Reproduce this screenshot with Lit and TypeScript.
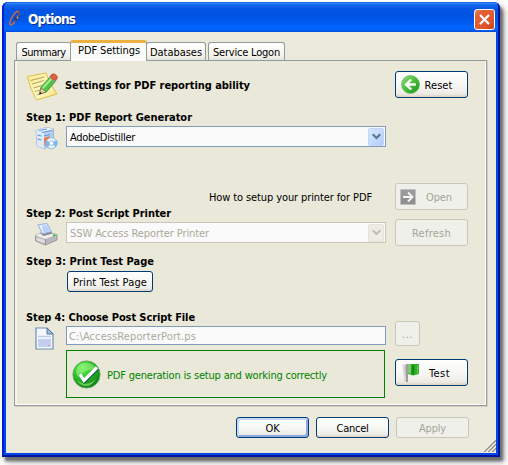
import { LitElement, html, svg, css } from "lit";
import { customElement, property } from "lit/decorators.js";

/** A single line of text whose tracking is adjusted to fill a given width. */
@customElement("fit-text")
class FitText extends LitElement {
  @property({ type: Number }) w = 0;
  @property() text = "";
  static styles = css`
    :host { display: inline-block; white-space: pre; flex: none; }
  `;
  render() {
    return html`<span>${this.text}</span>`;
  }
  updated() {
    const s = this.renderRoot.querySelector("span") as HTMLElement;
    s.style.letterSpacing = "0px";
    const natural = s.getBoundingClientRect().width;
    s.style.letterSpacing = (this.w - natural) / this.text.length + "px";
  }
}

const t = (text: string, w: number) => html`<fit-text .text=${text} .w=${w}></fit-text>`;

const notes = html`<svg width="31" height="29" viewBox="0 0 31 29">
  <defs><linearGradient id="p" x2="1" y2="1"><stop stop-color="#ffec8a"/><stop offset=".6" stop-color="#fdf8c8"/><stop offset="1" stop-color="#f6dc60"/></linearGradient></defs>
  <path d="M.500 4.500 L19 1 Q22 10 30 22 L9.500 28 Q3 17 .500 4.500Z" fill="url(#p)" stroke="#dfbd48"/>
  <path d="M3.500 8.500l14-3.500M5 12l12-3.500M6.500 16l8-2.500M8 19.500l5-1.500M10 23l5-2" stroke="#b4a860" stroke-width="1.200"/>
  <path d="M12.500 22l1.500-7L24 4l5 4.500L19.500 20z" fill="#55c046" stroke="#3a8a30" stroke-width=".8"/>
  <path d="M15.500 16.500L25 6" stroke="#a0ee8c" stroke-width="2"/>
  <path d="M12.500 22l1.500-6 5 4z" fill="#f2d6a0" stroke="#7c6240" stroke-width=".7"/>
  <path d="M12.500 22.500l.6-2.500 2 1.500z" fill="#222"/>
  <path d="M22.500 5l1.800-2 5.200 4.200-1.700 2.200z" fill="#c8d0dc" stroke="#7c8494" stroke-width=".5"/>
  <ellipse cx="27" cy="5" rx="3.500" ry="2.900" transform="rotate(38 27 5)" fill="#e2603e" stroke="#b84430" stroke-width=".6"/>
</svg>`;

const generator = html`<svg width="23" height="23" viewBox="0 0 23 23">
  <path d="M1 3.500L11 .500 18.500 2v14L9 22l-7-3z" fill="#b8cff0" stroke="#8aa4cf" stroke-width=".8"/>
  <path d="M1 3.500L11 .500 18.500 2 9 5z" fill="#edf5ff"/>
  <path d="M1 3.500L9 5v17l-7-3z" fill="#dfe9f6"/>
  <path d="M4 3.500l8-1.500M7 5.500l10-2M9 9l6-1.500M2.500 8l4 1M2.500 12l4 1" stroke="#5e98e6" stroke-width="1.200"/>
  <path d="M9 11l6-2-2 4-1 5-2.500 1z" fill="#ed7545"/>
  <circle cx="16.500" cy="16.200" r="5.600" fill="#e2f1fc" stroke="#89aad2" stroke-width=".8"/>
  <path d="M16.500 16l-5-2.500a5.600 5.600 0 0 0 1 7zM16.500 16l5-3a5.600 5.600 0 0 1-1 7z" fill="#79baf4"/>
  <circle cx="16.500" cy="16.200" r="2.100" fill="#fff" stroke="#a2b4cc" stroke-width=".8"/>
</svg>`;

const printer = html`<svg width="23" height="23" viewBox="0 0 23 23">
  <path d="M.500 12.500L8 8.500l14 3v5.500L10.500 22 .500 18z" fill="#b8b8ba" stroke="#8c8c90" stroke-width=".8"/>
  <path d="M.500 12.500L8 8.500l14 3-11.500 4.500z" fill="#efefef"/>
  <path d="M10.500 16v6" stroke="#98989b"/>
  <path d="M1.500 14.500l8 2.500v3.500l-8-3z" fill="#dededf"/>
  <path d="M5 10.500L15 8l3 2.500-9.500 2.500z" fill="#8b8b90"/>
  <path d="M3 1.800L12 .500 16.500 8.500l-9 2.500z" fill="#e4efff" stroke="#8ea6d0" stroke-width=".9"/>
  <path d="M7 2.800l4.500-.8 4 6-7 2z" fill="#b9d1fa"/>
  <path d="M18 12.500l2.500-.7" stroke="#23c32f" stroke-width="1.800"/>
</svg>`;

const page = html`<svg width="19" height="23" viewBox="0 0 19 23">
  <path d="M1 1h11l6 6v15H1z" fill="#f4f8fd" stroke="#6a8db6" stroke-width="1.200"/>
  <path d="M12 1v6h6z" fill="#a3c0e0" stroke="#54779c"/>
  <path d="M3 9.500h13" stroke="#bdcfeb" stroke-width="1.600"/>
  <path d="M3 12h13v8H3z" fill="#c2cff0"/>
  <path d="M13 18.500h1.500" stroke="#db8ea2"/>
</svg>`;

const resetIcon = html`<svg width="19" height="19" viewBox="0 0 19 19">
  <defs><linearGradient id="g" x2="1" y2="1"><stop stop-color="#8edf78"/><stop offset=".6" stop-color="#3cb532"/><stop offset="1" stop-color="#1c941a"/></linearGradient></defs>
  <circle cx="9.500" cy="9.500" r="9" fill="url(#g)" stroke="#6cb85e" stroke-width=".8"/>
  <path d="M14.800 9.500H6M10.200 4.500L5 9.500l5.200 5" fill="none" stroke="#fff" stroke-width="2.400"/>
</svg>`;

const openIcon = html`<svg width="16" height="16" viewBox="0 0 16 16">
  <path d="M.500.500h15v15H.500z" fill="#9a9a9a" stroke="#c0c0c0"/>
  <path d="M1 15h14V8H1z" fill="#848484" opacity=".45"/>
  <path d="M3 8h9M8 3.500L12.500 8 8 12.500" fill="none" stroke="#f4f4f4" stroke-width="1.900"/>
</svg>`;

const flag = html`<svg width="18" height="20" viewBox="0 0 18 20">
  <path d="M.500 1.500h4.500v17.500L2.500 18z" fill="#c4c4c4"/>
  <path d="M1.500 1.500v7l2 9" fill="none" stroke="#ddd" stroke-width="1.500"/><path d="M5 1v18" stroke="#969696" stroke-width="1.800"/>
  <path d="M6 1.500l4-.5 7 0v10l-6 1.500-5-1.500z" fill="#2fae28"/>
  <path d="M6 2h3v9l-3-1z" fill="#7acc6a"/><path d="M11 2v9.500" stroke="#178a14" stroke-width="2.500"/><path d="M15.800 2v8.500" stroke="#66cc55" stroke-width="1.200"/>
</svg>`;

const check = html`<svg width="29" height="29" viewBox="0 0 29 29">
  <defs><radialGradient id="c" cx=".35" cy=".25" r=".8"><stop stop-color="#74f060"/><stop offset=".45" stop-color="#2fc32b"/><stop offset="1" stop-color="#0c7912"/></radialGradient></defs>
  <circle cx="14.500" cy="14.500" r="13.600" fill="url(#c)" stroke="#67a565"/>
  <path d="M4 12Q5 3 14 3t10 7Q12 8 8 17q-3 0-4-5z" fill="#a6f58c" opacity=".5"/>
  <path d="M5 20q9 8 19-1-5 8-11 7-6-1-8-6z" fill="#8dec70" opacity=".65"/>
  <path d="M8.500 15.500l4 6L25.500 8.500" fill="none" stroke="#154e58" stroke-width="3.200"/>
  <path d="M8 14.500l4 6L25 7.500" fill="none" stroke="#fff" stroke-width="3.200"/>
</svg>`;

const chevron = html`<svg width="9" height="7" viewBox="0 0 9 7"><path d="M.700 1.200L4.500 5 8.300 1.200" fill="none" stroke="currentColor" stroke-width="2.200"/></svg>`;

const logo = html`<svg width="14" height="18" viewBox="0 0 14 18">
  <ellipse cx="5.500" cy="9" rx="2.600" ry="7.800" transform="rotate(32 5.500 9)" fill="none" stroke="#c4664e" stroke-width="1.500"/>
  <path d="M10 2.500v5L6 13" fill="none" stroke="#33405f" stroke-width="1.100"/>
  <path d="M6 7l4 1.500-2 3-3-1z" fill="#344057"/><path d="M7.500 7.500l2 1-1 1.500z" fill="#cfd4dc"/>
</svg>`;

const grip = html`<svg width="13" height="13" viewBox="0 0 13 13">
  ${[0, 4, 8].map((o) => svg`<path d=${`M${o + 1} 13L13 ${o + 1}`} stroke="#8f8e84" stroke-width="1.600"/><path d=${`M${o - 0.4} 13L13 ${o - 0.4}`} stroke="#fff" stroke-width=".8"/>`)}
</svg>`;

@customElement("app-root")
class AppRoot extends LitElement {
  static styles = css`
    :host {
      display: block; box-sizing: border-box; width: 508px; height: 465px; padding: 2px 8px 8px 2px;
      background: #fcfcfc; overflow: hidden; color: #000;
      font: 11px/14px "DejaVu Sans Condensed", "DejaVu Sans", sans-serif;
    }
    *, *::before { box-sizing: border-box; }
    svg { display: block; flex: none; }
    .window {
      height: 455px; width: 498px; display: flex; flex-direction: column;
      border-radius: 6px 6px 0 0; background: #0047e8; padding: 0 4px 4px;
      box-shadow: inset -2px -2px 0 #0014a0, inset 2px 0 0 #001fd0, 3px 4px 3px #6c6c6c, 4px 5px 6px #aaa;
    }
    .title {
      height: 30px; margin: 0 -2px; padding: 1px 3px 0 5px; display: flex; align-items: center; flex: none;
      border-radius: 5px 5px 0 0;
      background: linear-gradient(#0a52cc 0, #2d85fb 1px, #1468ec 3px, #0455e2 7px, #0054e3 14px, #0059ef 20px, #0066ff 25px, #0064fb 28px, #0048cf 30px);
    }
    .caption { margin: 3px 0 0 5px; color: #fff; font-size: 13.500px; line-height: 18px; font-weight: bold; text-shadow: 1px 1px 0 #0b2c80; }
    .close {
      margin: 3px 0 0 auto; width: 21px; height: 21px; border: 1px solid #fff; border-radius: 3px;
      background: linear-gradient(135deg, #d4958a 0, #e0603c 20%, #e25a2e 60%, #cb4317 100%);
      display: flex; align-items: center; justify-content: center;
    }
    .client { height: 421px; background: #ebe9db; padding: 8px 9px 0 8px; display: flex; flex-direction: column; position: relative; }
    .tabs { display: flex; height: 21px; align-items: flex-end; padding-left: 2px; position: relative; z-index: 1; margin-bottom: -1px; flex: none; }
    .tab {
      height: 18px; margin-bottom: 1px; border: 1px solid #919b9c; border-bottom: 0; border-radius: 3px 3px 0 0;
      background: linear-gradient(#fff, #f4f3ee 70%, #e5e4db); padding: 2px 0 0 4.500px;
    }
    .summary { width: 55px; } .databases { width: 60px; padding-left: 3px; } .service { width: 77px; margin-left: 2px; padding-left: 4px; }
    .active {
      width: 77px; height: 21px; margin: 0 -1px 0 -1px; position: relative; z-index: 2; padding: 0 0 0 7px;
      border-top: 3px solid #eab142; background: #fbfbfa;
    }
    .summary.tab { border-right: 0; }
    .panel {
      height: 346px; border: 1px solid #919b9c; display: grid; grid-template-columns: 369px 73px; align-items: start;
      padding-left: 11px; flex: none; box-shadow: inset 2px 0 0 #f6f5f0, inset -1px -1px 0 #fff, 1px 1px 0 #d2d0c2;
      background: #eae8d9;
    }
    .main, .side { display: flex; flex-direction: column; align-items: flex-start; }
    .main { width: 360px; }
    .head { display: flex; height: 32px; margin-top: 9px; align-items: center; }
    .head svg { margin: 0 7px 0 1px; }
    b { display: block; height: 14px; }
    b fit-text, .help fit-text, .tab fit-text { margin-top: 1px; }
    .active fit-text { margin-top: 1px; }
    .btn fit-text, .field fit-text { padding-top: 2px; }
    .head b fit-text { margin-top: 0; }
    .row { display: flex; height: 23px; margin-top: 2px; }
    .ico { width: 40px; padding: 1px 0 0 9px; flex: none; }
    .field {
      width: 320px; height: 21px; border: 1px solid #7f9db9; background: #fafafa;
      display: flex; align-items: center; justify-content: space-between; padding: 0 1px 0 3px;
    }
    .text { height: 19px; padding-left: 2px; color: #aaa99a; }
    .off { border-color: #c9c7ba; color: #aca899; }
    .drop { width: 16px; height: 18px; border-radius: 2px; background: linear-gradient(135deg, #d8e7ff, #b4cef8); color: #557a93; display: flex; align-items: center; justify-content: center; border: 1px solid #c1d5f8; }
    .off .drop { background: #eeede5; border-color: #e5e3da; color: #c2c0b2; }
    .help { align-self: flex-end; height: 14px; margin: 41px 14px 0 0; }
    .s1 { margin-top: 8px; } .s2 { margin-top: 2px; } .s3 { margin-top: 9px; } .s4 { margin-top: 18px; }
    .btn {
      width: 73px; height: 27px; border: 1px solid #003c74; border-radius: 3px; display: flex; align-items: center; justify-content: center; flex: none;
      background: linear-gradient(#fff, #f5f5f1 60%, #eceae3 88%, #d8d2c3);
    }
    .dis { border-color: #c9c7ba; color: #a5a496; background: #f0f0eb; }
    .short { height: 21px; }
    .default { box-shadow: inset 2px 2px 0 #c4d9fa, inset -2px -2px 0 #8ba9e3; }
    .print { width: 86px; margin: 3px 0 0 41px; }
    .reset { margin-top: 10px; gap: 5px; padding-right: 10px; }
    .open { margin-top: 85px; gap: 10px; padding-right: 11px; }
    .refresh { margin-top: 9px; }
    .dots { width: 25px; height: 25px; margin-top: 75px; }
    .test { margin-top: 13px; gap: 9px; padding-right: 11px; }
    .status { width: 319px; height: 48px; margin: 1px 0 0 40px; border: 1px solid #008200; color: #008200; display: flex; align-items: center; gap: 6px; padding-left: 5px; }
    .status fit-text { margin-top: 3px; }
    .actions { display: flex; justify-content: flex-end; gap: 7px; margin: 11px 18px 0 0; }
    .grip { position: absolute; right: 0; bottom: 1px; }
  `;

  render() {
    return html`<div class="window">
      <div class="title">
        ${logo}<span class="caption">${t("Options", 47)}</span>
        <span class="close"><svg width="13" height="13" viewBox="0 0 13 13"><path d="M2 2l9 9M11 2l-9 9" stroke="#fff" stroke-width="2.200"/></svg></span>
      </div>
      <div class="client">
        <div class="tabs">
          <div class="tab summary">${t("Summary", 44)}</div>
          <div class="tab active">${t("PDF Settings", 62)}</div>
          <div class="tab databases">${t("Databases", 52)}</div>
          <div class="tab service">${t("Service Logon", 67)}</div>
        </div>
        <div class="panel">
          <div class="main">
            <div class="head">${notes}<b>${t("Settings for PDF reporting ability", 185)}</b></div>
            <b class="s1">${t("Step 1: PDF Report Generator", 166)}</b>
            <div class="row"><span class="ico">${generator}</span>
              <div class="field">${t("AdobeDistiller", 65)}<span class="drop">${chevron}</span></div></div>
            <div class="help">${t("How to setup your printer for PDF", 163)}</div>
            <b class="s2">${t("Step 2: Post Script Printer", 145)}</b>
            <div class="row"><span class="ico">${printer}</span>
              <div class="field off">${t("SSW Access Reporter Printer", 139)}<span class="drop">${chevron}</span></div></div>
            <b class="s3">${t("Step 3: Print Test Page", 128)}</b>
            <div class="btn short print">${t("Print Test Page", 74)}</div>
            <b class="s4">${t("Step 4: Choose Post Script File", 169)}</b>
            <div class="row"><span class="ico">${page}</span>
              <div class="field text">${t("C:\\AccessReporterPort.ps", 127)}</div></div>
            <div class="status">${check}${t("PDF generation is setup and working correctly", 220)}</div>
          </div>
          <div class="side">
            <div class="btn reset">${resetIcon}${t("Reset", 28)}</div>
            <div class="btn dis open">${openIcon}${t("Open", 26)}</div>
            <div class="btn dis refresh">${t("Refresh", 39)}</div>
            <div class="btn dis dots">${t("...", 11)}</div>
            <div class="btn test">${flag}${t("Test", 21)}</div>
          </div>
        </div>
        <div class="actions">
          <div class="btn short default">${t("OK", 14)}</div>
          <div class="btn short">${t("Cancel", 32)}</div>
          <div class="btn short dis">${t("Apply", 27)}</div>
        </div>
        <span class="grip">${grip}</span>
      </div>
    </div>`;
  }
}
